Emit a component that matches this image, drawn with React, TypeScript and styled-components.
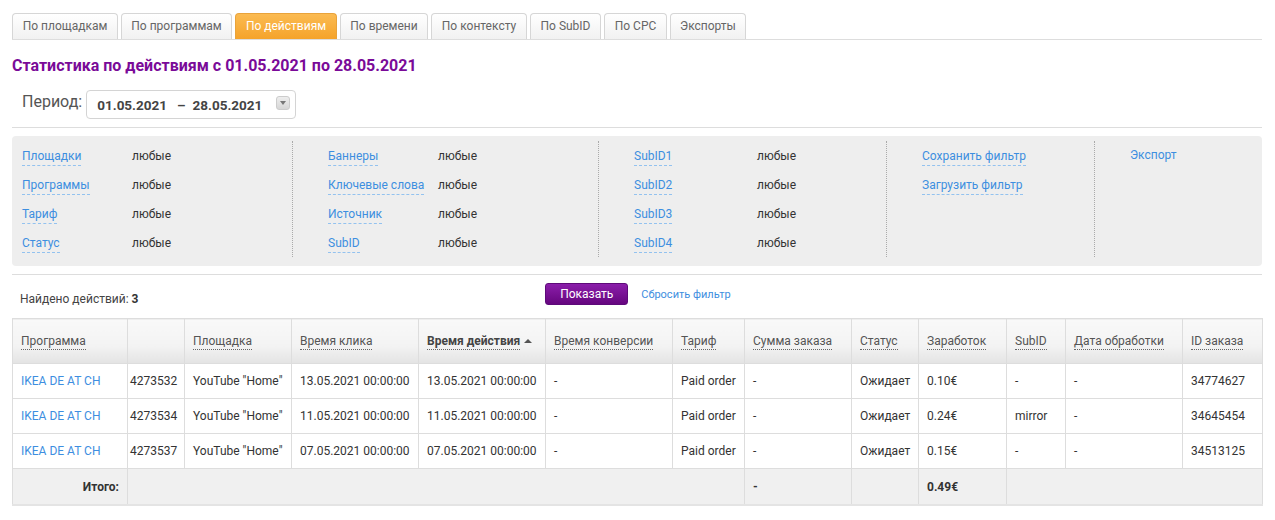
import * as React from 'react'
import styled, { createGlobalStyle } from 'styled-components'

const GlobalStyle = createGlobalStyle`
  body {
    margin: 0;
    background: #fff;
    font-family: Roboto, 'Liberation Sans', Arial, sans-serif;
    font-size: 12px;
    color: #333;
  }
`

const Page = styled.div`
  padding: 13px 13px 0 12px;
`

const Tabs = styled.div`
  display: flex;
  gap: 3px;
  border-bottom: 1px solid #ddd;
  height: 26px;
`

const Tab = styled.div<{ $active?: boolean; $w: number }>`
  width: ${p => p.$w}px;
  height: 26px;
  box-sizing: border-box;
  display: flex;
  align-items: center;
  justify-content: center;
  padding-bottom: 1px;
  border: 1px solid ${p => (p.$active ? '#e9a33b' : '#d6d6d6')};
  border-bottom: none;
  border-radius: 4px 4px 0 0;
  background: ${p =>
    p.$active ? 'linear-gradient(#fbbb52, #f5a32a)' : 'linear-gradient(#ffffff, #f1f1f1)'};
  color: ${p => (p.$active ? '#fff' : '#666')};
  font-size: 12px;
  white-space: nowrap;
`

const Title = styled.h1`
  margin: 16px 0 0;
  font-size: 16px;
  line-height: 20px;
  font-weight: bold;
  color: #7a0a98;
`

const PeriodRow = styled.div`
  display: flex;
  align-items: center;
  gap: 4px;
  margin-top: 14px;
  padding: 0 0 8px 10px;
  border-bottom: 1px solid #ddd;
`

const PeriodLabel = styled.span`
  font-size: 16px;
  color: #555;
  margin-top: -6px;
`

const DateBox = styled.div`
  width: 210px;
  height: 29px;
  box-sizing: border-box;
  border: 1px solid #d4d4d4;
  border-radius: 4px;
  display: flex;
  align-items: center;
  padding: 0 5px 0 10px;
  font-size: 13.5px;
  font-weight: bold;
  color: #444;
`

const Dash = styled.span`
  margin: 0 7px 0 10px;
`

const DropButton = styled.span`
  margin-left: auto;
  width: 14px;
  height: 14px;
  border-radius: 3px;
  background: linear-gradient(#eee, #d6d6d6);
  border: 1px solid #ccc;
  box-sizing: border-box;
  display: flex;
  align-items: center;
  justify-content: center;
  margin-top: -4px;
`

const FilterBox = styled.div`
  margin-top: 8px;
  background: #eee;
  border-radius: 4px;
  padding: 5px 0 9px;
  display: grid;
  grid-template-columns: 280px 306px 288px 208px 1fr;
`

const FilterCol = styled.div<{ $first?: boolean }>`
  border-left: ${p => (p.$first ? 'none' : '1px dotted #aaa')};
  padding-left: ${p => (p.$first ? '10px' : '35px')};
`

const FilterRow = styled.div`
  height: 29px;
  display: flex;
  align-items: center;
`

const FilterLabel = styled.div<{ $w: number }>`
  width: ${p => p.$w}px;
  flex-shrink: 0;
`

const DashLink = styled.span`
  color: #3d8ee0;
  border-bottom: 1px dashed #93c2ef;
  padding-bottom: 2px;
  margin-top: 3px;
  display: inline-block;
`

const PlainLink = styled.span`
  color: #3d8ee0;
  margin-top: 1px;
  padding-bottom: 2px;
  display: inline-block;
`

const Separator = styled.div`
  margin-top: 8px;
  border-top: 1px solid #ddd;
`

const Toolbar = styled.div`
  display: grid;
  grid-template-columns: 1fr auto 1fr;
  align-items: center;
  height: 44px;
`

const Found = styled.div`
  padding-left: 8px;
  margin-top: 4px;
  color: #444;
  b {
    color: #333;
  }
`

const ActionGroup = styled.div`
  display: flex;
  align-items: center;
  gap: 13px;
  margin-top: -6px;
  margin-left: 2px;
`

const ShowButton = styled.button`
  width: 83px;
  height: 22px;
  border: 1px solid #5e0a7a;
  border-radius: 3px;
  background: linear-gradient(#8b1eaa, #66067f);
  color: #fff;
  font-family: inherit;
  font-size: 12px;
  padding: 0;
`

const ResetLink = styled.span`
  color: #3d8ee0;
  font-size: 11px;
`

const Table = styled.table`
  width: 1250px;
  margin-top: -1px;
  border-collapse: collapse;
  table-layout: fixed;
  border: 1px solid #ddd;
`

const Th = styled.th<{ $sorted?: boolean }>`
  height: 44px;
  padding: 0 8px;
  text-align: left;
  font-weight: ${p => (p.$sorted ? 'bold' : 'normal')};
  color: ${p => (p.$sorted ? '#444' : '#555')};
  background: linear-gradient(#f9f9f9, #f3f3f3 60%, #e3e3e3);
  border: 1px solid #ddd;
  white-space: nowrap;
  span {
    border-bottom: 1px dotted #666;
    padding-bottom: 1px;
  }
`

const Arrow = styled.i`
  display: inline-block;
  margin-left: 4px;
  width: 0;
  height: 0;
  border-left: 4px solid transparent;
  border-right: 4px solid transparent;
  border-bottom: 4px solid #555;
  vertical-align: 2px;
`

const Td = styled.td<{ $tight?: boolean; $link?: boolean }>`
  height: 34px;
  padding: ${p => (p.$tight ? '0 2px' : '0 8px')};
  border: 1px solid #ddd;
  white-space: nowrap;
  overflow: hidden;
  color: ${p => (p.$link ? '#3d8ee0' : '#333')};
`

const TotalTd = styled.td<{ $right?: boolean }>`
  height: 35px;
  padding: 0 8px;
  background: #f0f0f0;
  border: 1px solid #ddd;
  border-bottom: 2px solid #e4e4e4;
  text-align: ${p => (p.$right ? 'right' : 'left')};
  font-weight: bold;
`

const tabs: [string, number][] = [
  ['По площадкам', 106],
  ['По программам', 111],
  ['По действиям', 102],
  ['По времени', 88],
  ['По контексту', 96],
  ['По SubID', 71],
  ['По CPC', 63],
  ['Экспорты', 76],
]

const colWidths = [115, 57, 107, 127, 127, 127, 72, 107, 67, 88, 59, 117, 80]

const headers = [
  'Программа',
  '',
  'Площадка',
  'Время клика',
  'Время действия',
  'Время конверсии',
  'Тариф',
  'Сумма заказа',
  'Статус',
  'Заработок',
  'SubID',
  'Дата обработки',
  'ID заказа',
]

const rows = [
  ['4273532', '13.05.2021 00:00:00', '0.10€', '-', '34774627'],
  ['4273534', '11.05.2021 00:00:00', '0.24€', 'mirror', '34645454'],
  ['4273537', '07.05.2021 00:00:00', '0.15€', '-', '34513125'],
]

const filterCols = [
  { w: 110, items: ['Площадки', 'Программы', 'Тариф', 'Статус'] },
  { w: 110, items: ['Баннеры', 'Ключевые слова', 'Источник', 'SubID'] },
  { w: 123, items: ['SubID1', 'SubID2', 'SubID3', 'SubID4'] },
]

export default function App() {
  return (
    <Page>
      <GlobalStyle />
      <Tabs>
        {tabs.map(([name, w]) => (
          <Tab key={name} $w={w} $active={name === 'По действиям'}>
            {name}
          </Tab>
        ))}
      </Tabs>

      <Title>Статистика по действиям с 01.05.2021 по 28.05.2021</Title>

      <PeriodRow>
        <PeriodLabel>Период:</PeriodLabel>
        <DateBox>
          01.05.2021<Dash>–</Dash>28.05.2021
          <DropButton>
            <svg width="6" height="4" viewBox="0 0 6 4">
              <path d="M0 0h6L3 4z" fill="#777" />
            </svg>
          </DropButton>
        </DateBox>
      </PeriodRow>

      <FilterBox>
        {filterCols.map((col, i) => (
          <FilterCol key={i} $first={i === 0}>
            {col.items.map(item => (
              <FilterRow key={item}>
                <FilterLabel $w={col.w}>
                  <DashLink>{item}</DashLink>
                </FilterLabel>
                <span>любые</span>
              </FilterRow>
            ))}
          </FilterCol>
        ))}
        <FilterCol>
          <FilterRow>
            <DashLink>Сохранить фильтр</DashLink>
          </FilterRow>
          <FilterRow>
            <DashLink>Загрузить фильтр</DashLink>
          </FilterRow>
        </FilterCol>
        <FilterCol>
          <FilterRow>
            <PlainLink>Экспорт</PlainLink>
          </FilterRow>
        </FilterCol>
      </FilterBox>

      <Separator />

      <Toolbar>
        <Found>
          Найдено действий: <b>3</b>
        </Found>
        <ActionGroup>
          <ShowButton>Показать</ShowButton>
          <ResetLink>Сбросить фильтр</ResetLink>
        </ActionGroup>
        <div />
      </Toolbar>

      <Table>
        <colgroup>
          {colWidths.map((w, i) => (
            <col key={i} style={{ width: w }} />
          ))}
        </colgroup>
        <thead>
          <tr>
            {headers.map((h, i) => (
              <Th key={i} $sorted={i === 4}>
                {h && <span>{h}</span>}
                {i === 4 && <Arrow />}
              </Th>
            ))}
          </tr>
        </thead>
        <tbody>
          {rows.map(([id, date, earn, sub, order]) => (
            <tr key={id}>
              <Td $link>IKEA DE AT CH</Td>
              <Td $tight>{id}</Td>
              <Td>YouTube "Home"</Td>
              <Td>{date}</Td>
              <Td>{date}</Td>
              <Td>-</Td>
              <Td>Paid order</Td>
              <Td>-</Td>
              <Td>Ожидает</Td>
              <Td>{earn}</Td>
              <Td>{sub}</Td>
              <Td>-</Td>
              <Td>{order}</Td>
            </tr>
          ))}
          <tr>
            <TotalTd $right>Итого:</TotalTd>
            <TotalTd colSpan={6} />
            <TotalTd>-</TotalTd>
            <TotalTd />
            <TotalTd>0.49€</TotalTd>
            <TotalTd colSpan={3} />
          </tr>
        </tbody>
      </Table>
    </Page>
  )
}
